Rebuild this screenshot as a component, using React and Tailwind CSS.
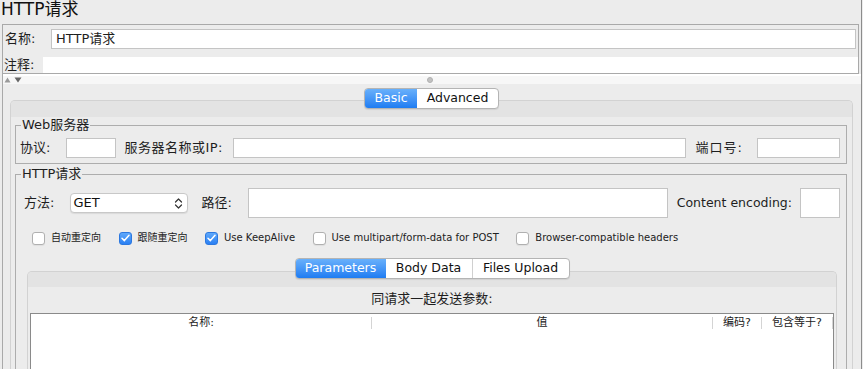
import React from "react";

const FONT = "font-['DejaVu_Sans','Noto_Sans_CJK_SC',sans-serif]";

const Segmented = ({ items, active }) => (
  <div className="flex h-[21px] rounded-[4px] border border-[#b4b4b4] bg-white overflow-hidden shadow-[0_1px_1px_rgba(0,0,0,0.08)]">
    {items.map((it, i) => (
      <div
        key={it.label}
        className={
          i === active
            ? "flex items-center justify-center bg-gradient-to-b from-[#68b0fb] to-[#1d7cf2] text-white text-[12.5px]"
            : i > 0 && i - 1 !== active
            ? "flex items-center justify-center border-l border-[#d0d0d0] text-[#111] text-[12.5px]"
            : "flex items-center justify-center text-[#111] text-[12.5px]"
        }
        style={{ width: it.w }}
      >
        {it.label}
      </div>
    ))}
  </div>
);

const Check = ({ checked, label }) => (
  <div className="flex items-center">
    {checked ? (
      <div className="w-[13px] h-[13px] rounded-[3px] bg-gradient-to-b from-[#5ea8fa] to-[#2a80f3] border border-[#2c78e0] flex items-center justify-center">
        <svg width="9" height="8" viewBox="0 0 9 8">
          <path d="M1 4.2 L3.4 6.6 L8 1.2" fill="none" stroke="#fff" strokeWidth="1.5" strokeLinecap="round" strokeLinejoin="round" />
        </svg>
      </div>
    ) : (
      <div className="w-[13px] h-[13px] rounded-[3px] bg-white border border-[#b0b0b0] shadow-[0_1px_1px_rgba(0,0,0,0.06)]" />
    )}
    <span className="ml-[6px] text-[10px] leading-[12px] text-[#222]">{label}</span>
  </div>
);

const Sep = () => <div className="w-px h-[12px] bg-[#d4d4d4]" />;

export default function App() {
  return (
    <div className={`w-[863px] h-[369px] overflow-hidden bg-[#ececec] text-[#1e1e1e] ${FONT}`}>
      <div className="w-[862px] h-full border-r border-[#8c8c8c] flex flex-col">
        {/* Title */}
        <div className="h-[24px] shrink-0 pl-[1px] text-[17px] leading-[19px] text-[#111]">HTTP请求</div>

        <div className="flex-1 ml-[2px] border-l border-[#a9a9a9] flex flex-col min-h-0">
          {/* Name / comment box */}
          <div className="h-[50px] shrink-0 mr-[2px] border-t border-r border-b border-[#a9a9a9] flex flex-col">
            <div className="flex items-center mt-[4px] pl-[2px] pr-[2px]">
              <span className="w-[46px] text-[13px]">名称:</span>
              <div className="flex-1 h-[20px] bg-white border border-[#c4c4c4] flex items-center pl-[4px] text-[13px]">HTTP请求</div>
            </div>
            <div className="flex items-end mt-auto">
              <span className="w-[40px] pl-[1px] text-[13px] leading-[16px]">注释:</span>
              <div className="flex-1 h-[16px] bg-white" />
            </div>
          </div>

          {/* Splitter */}
          <div className="h-[10px] shrink-0 border-t-2 border-white bg-[#f7f7f7] flex items-center">
            <svg width="20" height="6" viewBox="0 0 20 6" className="ml-[1px]">
              <path d="M0.5 5.5 L3.5 0.5 L6.5 5.5 Z" fill="#9a9a9a" />
              <path d="M10.5 0.5 L17.5 0.5 L14 5.5 Z" fill="#666" />
            </svg>
            <div className="ml-[403px] w-[6px] h-[6px] rounded-full bg-[#c2c2c2] border border-[#b0b0b0]" />
          </div>

          {/* Main tabbed area */}
          <div className="flex-1 flex flex-col pt-[4px] min-h-0">
            <div className="flex justify-center ml-[7px] mr-[8px] relative z-10 -mb-[9px]">
              <Segmented items={[{ label: "Basic", w: 52 }, { label: "Advanced", w: 81 }]} active={0} />
            </div>
            <div className="flex-1 ml-[7px] mr-[8px] rounded-t-[5px] border border-b-0 border-[#d2d2d2] flex flex-col">
              <div className="h-[16px] shrink-0 bg-[#e3e3e3] rounded-t-[4px]" />

              {/* Web server */}
              <fieldset className="ml-[4px] mr-[5px] border border-[#adadad] pl-[4px] pr-[6px] pt-[5px] pb-[5px]">
                <legend className="ml-[1px] px-[1px] text-[13px] leading-[16px]">Web服务器</legend>
                <div className="flex items-center text-[13px]">
                  <span>协议:</span>
                  <div className="ml-[16px] w-[50px] h-[20px] bg-white border border-[#c4c4c4]" />
                  <span className="ml-[8px] tracking-[0.5px]">服务器名称或IP:</span>
                  <div className="ml-[10px] flex-1 h-[20px] bg-white border border-[#c4c4c4]" />
                  <span className="ml-[10px] tracking-[1px]">端口号:</span>
                  <div className="ml-[14px] w-[83px] h-[20px] bg-white border border-[#c4c4c4]" />
                </div>
              </fieldset>

              {/* HTTP request */}
              <fieldset className="mt-[2px] ml-[4px] mr-[5px] border border-b-0 border-[#adadad] pl-[4px] pr-[6px] pt-[6px] flex-1 min-h-0">
                <legend className="ml-[1px] px-[1px] text-[13px] leading-[16px]">HTTP请求</legend>
                <div className="flex items-center h-[30px] ml-[4px] text-[13px]">
                  <span>方法:</span>
                  <div className="ml-[16px] w-[118px] h-[20px] bg-white border border-[#c8c8c8] rounded-[4px] flex items-center shadow-[0_1px_1px_rgba(0,0,0,0.08)]">
                    <span className="pl-[2px] text-[13px] text-[#111]">GET</span>
                    <svg width="9" height="13" viewBox="0 0 9 13" className="ml-auto mr-[4px]">
                      <path d="M1.5 5 L4.5 2 L7.5 5" fill="none" stroke="#333" strokeWidth="1.2" strokeLinecap="round" strokeLinejoin="round" />
                      <path d="M1.5 8 L4.5 11 L7.5 8" fill="none" stroke="#333" strokeWidth="1.2" strokeLinecap="round" strokeLinejoin="round" />
                    </svg>
                  </div>
                  <span className="ml-[13px]">路径:</span>
                  <div className="ml-[16px] flex-1 h-[30px] bg-white border border-[#c4c4c4]" />
                  <span className="ml-[9px] text-[12.5px]">Content encoding:</span>
                  <div className="ml-[8px] w-[40px] h-[30px] bg-white border border-[#c4c4c4]" />
                </div>

                <div className="flex items-center gap-[17.5px] h-[14px] mt-[13px] ml-[12px]">
                  <Check label="自动重定向" />
                  <Check checked label="跟随重定向" />
                  <Check checked label="Use KeepAlive" />
                  <Check label="Use multipart/form-data for POST" />
                  <Check label="Browser-compatible headers" />
                </div>

                {/* Parameters panel */}
                <div className="mt-[13px] flex flex-col">
                  <div className="flex justify-center ml-[7px] mr-[3px] relative z-10 -mb-[8px]">
                    <Segmented
                      items={[
                        { label: "Parameters", w: 90 },
                        { label: "Body Data", w: 86 },
                        { label: "Files Upload", w: 97 },
                      ]}
                      active={0}
                    />
                  </div>
                  <div className="ml-[7px] mr-[3px] rounded-t-[5px] border border-b-0 border-[#d2d2d2] flex flex-col h-[120px]">
                    <div className="h-[15px] bg-[#e3e3e3] rounded-t-[4px]" />
                    <div className="mt-[4px] text-center text-[13px] leading-[16px]">同请求一起发送参数:</div>
                    <div className="mt-[6px] mx-[2px] flex-1 bg-white border border-[#8a8a8a]">
                      <div className="flex items-center h-[18px] text-[11px] text-[#222]">
                        <div className="w-[340px] text-center">名称:</div>
                        <Sep />
                        <div className="w-[340px] text-center">值</div>
                        <Sep />
                        <div className="w-[48px] text-center">编码?</div>
                        <Sep />
                        <div className="w-[70px] text-center">包含等于?</div>
                        <Sep />
                      </div>
                    </div>
                  </div>
                </div>
              </fieldset>
            </div>
          </div>
        </div>
      </div>
    </div>
  );
}
